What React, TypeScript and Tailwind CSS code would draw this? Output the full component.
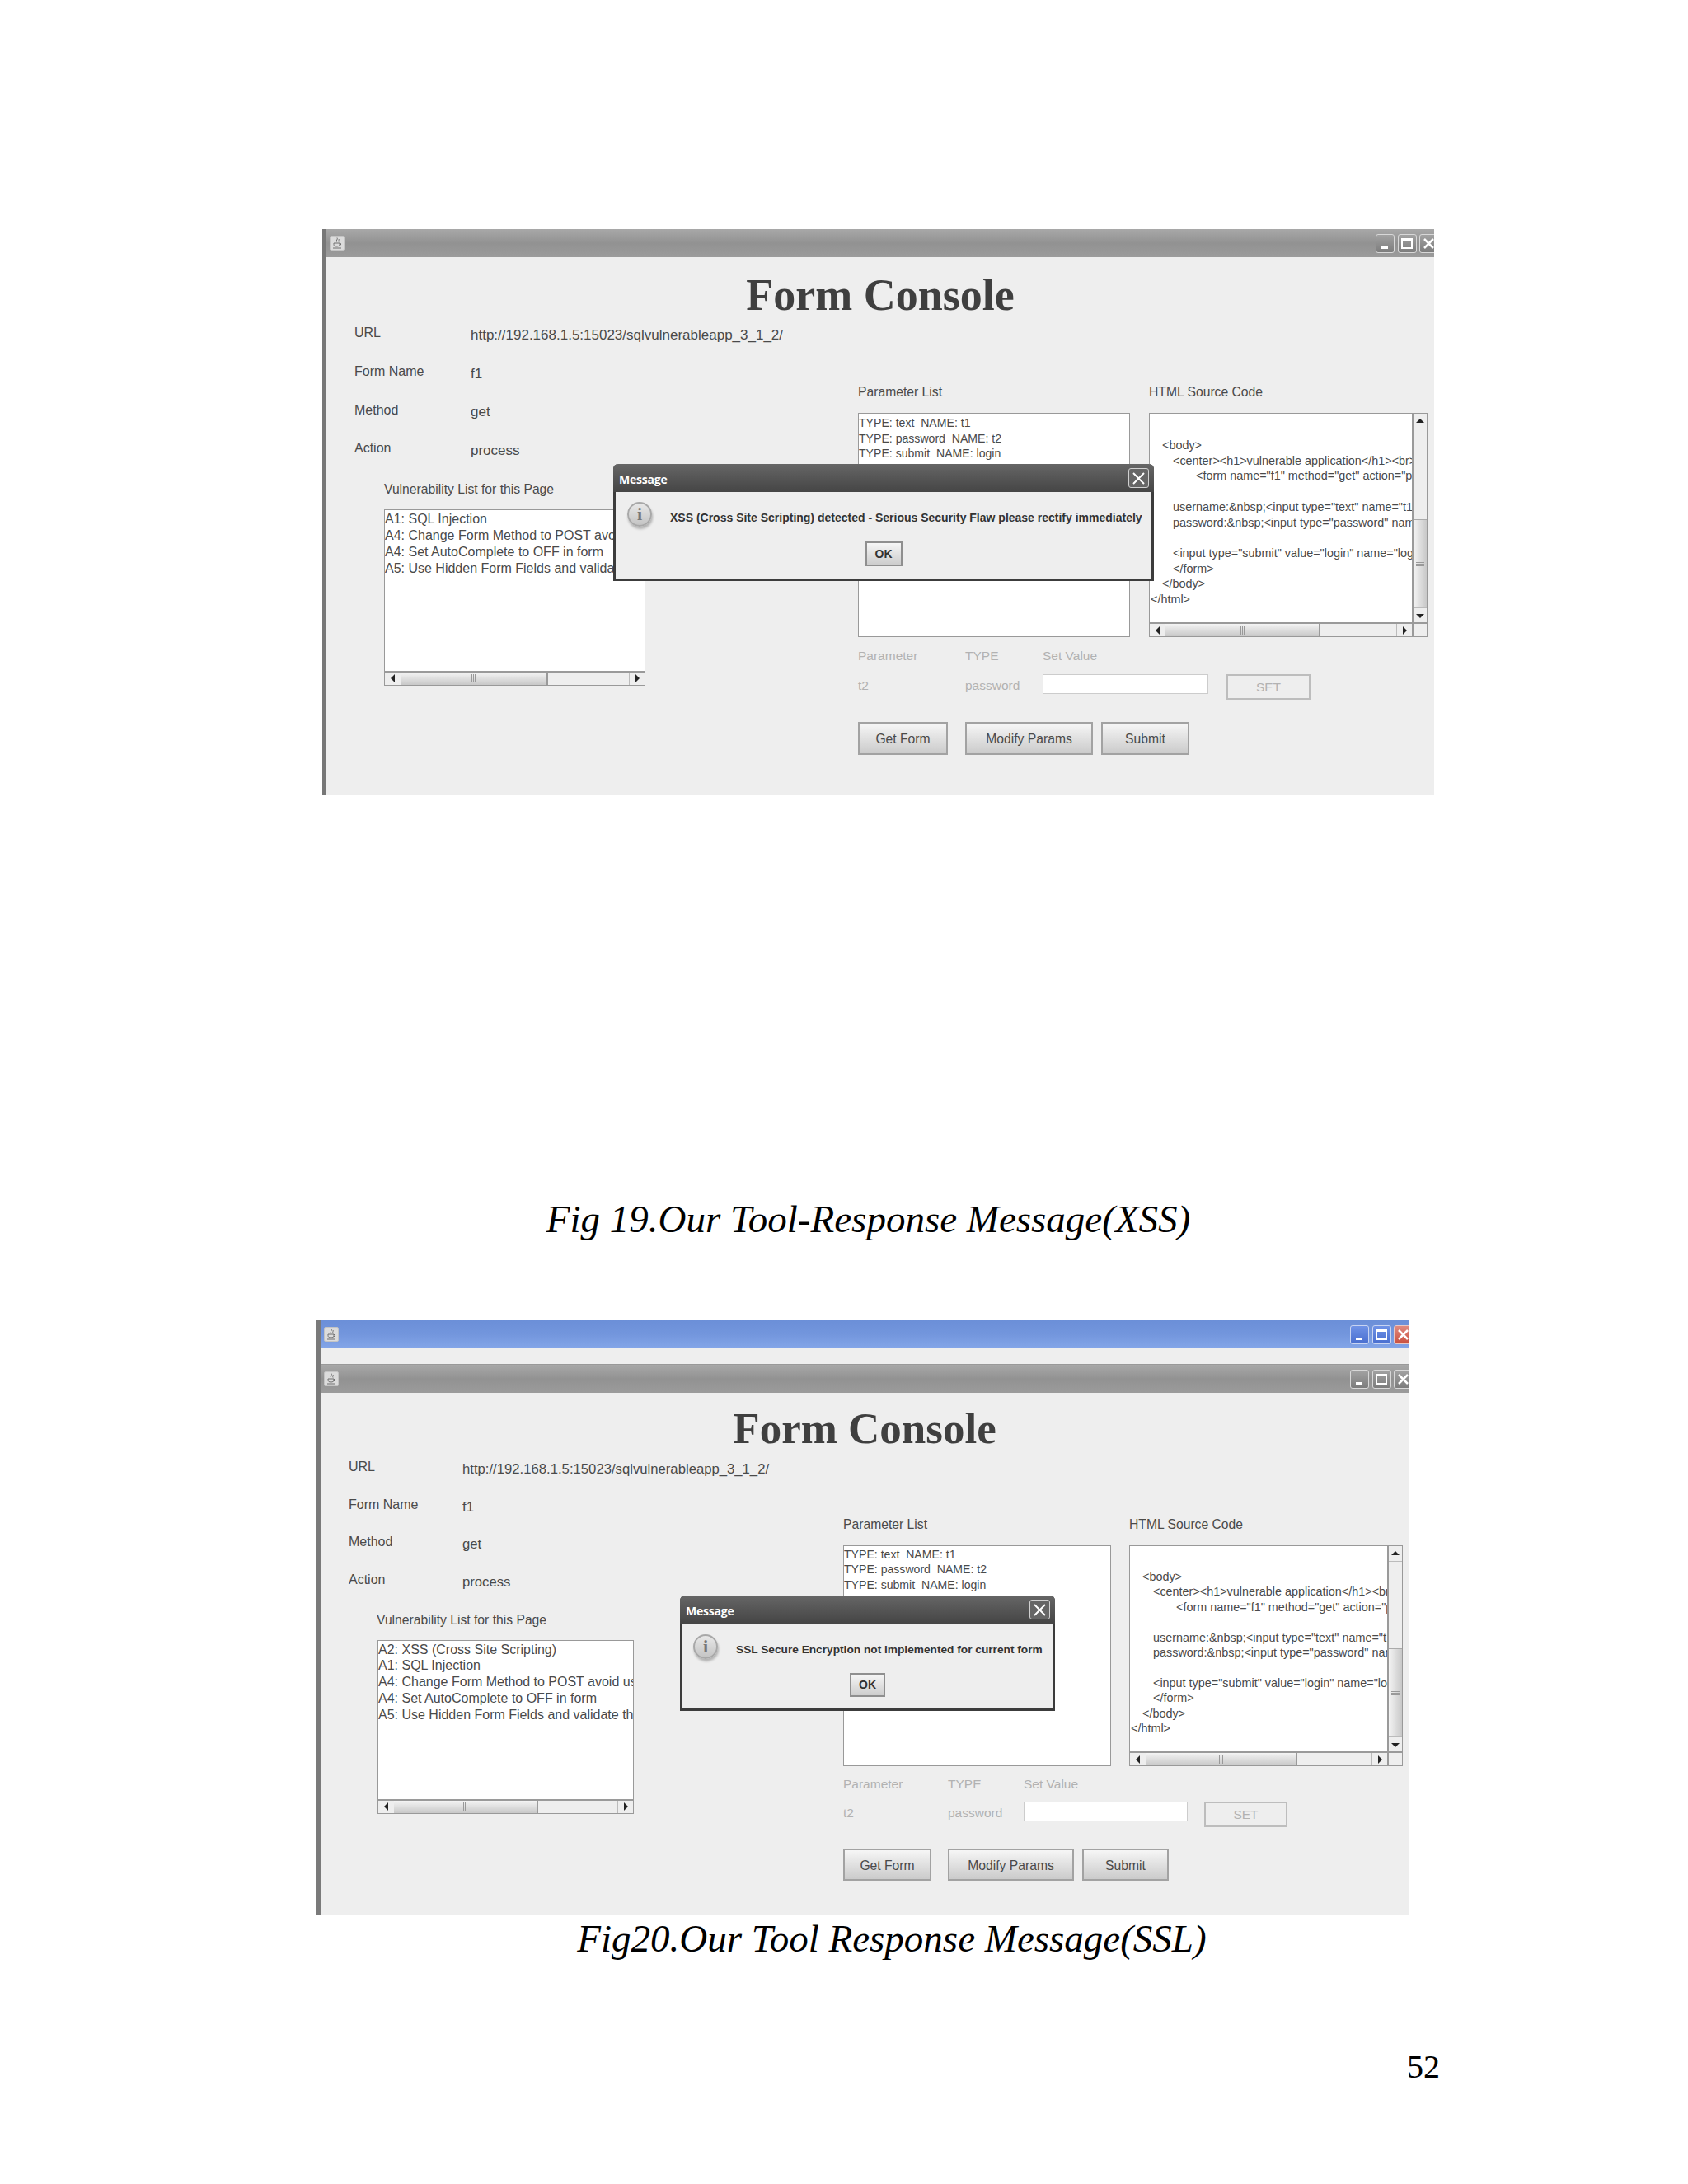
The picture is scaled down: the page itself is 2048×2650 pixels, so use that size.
import React from 'react';

const one = {
  heading: 'mt-[23px] h-[46px] text-[54px]',
  leftCol: 'w-[645px] pl-[34px]',
  rows: 'grid-cols-[141px_1fr] auto-rows-[46.7px]',
  value: 'text-[17px]',
  vulnLabel: 'mt-[16px] ml-[36px]',
  vulnBox: 'mt-[14px] ml-[36px] w-[317px] h-[214px]',
  vulnText: 'pt-[1px] leading-[20px]',
  rightCol: 'mt-[85px]',
  boxes: 'mt-[15px] gap-[23px] h-[272px]',
  paramBox: 'w-[330px] pt-[2px] leading-[18.7px]',
  sourceBox: 'w-[338px]',
  sourceText: 'pt-[29px] leading-[18.7px]',
  labelGap: 'gap-[23px]',
  paramLabelCol: 'w-[330px]',
  row1: 'mt-[13px]',
  col1: 'w-[130px]',
  col2: 'w-[94px]',
  row2: 'mt-[12px]',
  valueInput: 'w-[201px]',
  setBtn: 'ml-[22px] w-[102px]',
  buttons: 'mt-[27px] h-[40px]',
  getBtn: 'w-[109px]',
  modifyBtn: 'ml-[21px] w-[155px]',
  submitBtn: 'ml-[10px] w-[107px]',
  dialog: 'left-[348px] top-[251px] w-[656px] h-[142px]',
  dialogPad: 'pl-[14px] mt-[12px]',
  message: 'text-[14px]',
  okBtn: 'mt-[18px] w-[45px] h-[30px]',
};

const two = {
  heading: 'mt-[20px] h-[47px] text-[53px]',
  leftCol: 'w-[634px] pl-[34px]',
  rows: 'grid-cols-[138px_1fr] auto-rows-[45.7px]',
  value: 'text-[16.7px]',
  vulnLabel: 'mt-[16px] ml-[34px]',
  vulnBox: 'mt-[14px] ml-[35px] w-[311px] h-[211px]',
  vulnText: 'pt-[1px] leading-[19.7px]',
  rightCol: 'mt-[83px]',
  boxes: 'mt-[15px] gap-[22px] h-[268px]',
  paramBox: 'w-[325px] pt-[1px] leading-[18.4px]',
  sourceBox: 'w-[332px]',
  sourceText: 'pt-[28px] leading-[18.4px]',
  labelGap: 'gap-[22px]',
  paramLabelCol: 'w-[325px]',
  row1: 'mt-[12px]',
  col1: 'w-[127px]',
  col2: 'w-[92px]',
  row2: 'mt-[11px]',
  valueInput: 'w-[199px]',
  setBtn: 'ml-[20px] w-[101px]',
  buttons: 'mt-[26px] h-[39px]',
  getBtn: 'w-[107px]',
  modifyBtn: 'ml-[20px] w-[153px]',
  submitBtn: 'ml-[10px] w-[105px]',
  dialog: 'left-[436px] top-[246px] w-[455px] h-[140px]',
  dialogPad: 'pl-[13px] mt-[13px]',
  message: 'text-[13.7px]',
  okBtn: 'mt-[17px] w-[43px] h-[29px]',
};

const sourceLines = [
  { text: '<body>', cls: 'pl-[15px]' },
  { text: '<center><h1>vulnerable application</h1><br>', cls: 'pl-[28px]' },
  { text: '<form name="f1" method="get" action="process">', cls: 'pl-[56px]' },
  { text: '\u00a0', cls: '' },
  { text: 'username:&nbsp;<input type="text" name="t1">', cls: 'pl-[28px]' },
  { text: 'password:&nbsp;<input type="password" name="t2">', cls: 'pl-[28px]' },
  { text: '\u00a0', cls: '' },
  { text: '<input type="submit" value="login" name="login">', cls: 'pl-[28px]' },
  { text: '</form>', cls: 'pl-[28px]' },
  { text: '</body>', cls: 'pl-[15px]' },
  { text: '</html>', cls: 'pl-[1px]' },
];

function JavaIcon() {
  return (
    <div className="w-[18px] h-[18px] rounded-[2px] bg-[#dcdcdc] border border-[#c4c4c4] flex items-center justify-center">
      <svg width="12" height="15" viewBox="0 0 12 15" fill="none" stroke="#6f6f6f" strokeWidth="1">
        <path d="M6 0.5c1.5 2-2 3-0.5 5M8 2c1 1.2-1 2 0 3.5" />
        <path d="M2 7h7v1.5C9 10 8 11 5.500 11S2 10 2 8.500zM9 7.500h1.500V9L8.500 10M1 13h10" />
      </svg>
    </div>
  );
}

function WindowControls({ blue }: { blue?: boolean }) {
  const box = blue
    ? 'bg-linear-to-b from-[#6f92e6] to-[#4a6fd0] border-[#c8d4f2]'
    : 'bg-linear-to-b from-[#a2a2a2] to-[#7d7d7d] border-[#d8d8d8]';
  return (
    <div className="flex gap-[3.5px] -mr-[5px]">
      <div className={`w-[23px] h-[23px] rounded-[3px] border flex items-end pl-[6px] pb-[4px] ${box}`}>
        <div className="w-[8px] h-[3px] bg-white" />
      </div>
      <div className={`w-[23px] h-[23px] rounded-[3px] border flex items-center justify-center ${box}`}>
        <div className="w-[14px] h-[13px] border-2 border-t-[3px] border-white" />
      </div>
      <div
        className={`w-[23px] h-[23px] rounded-[3px] border flex items-center justify-center ${
          blue ? 'bg-linear-to-b from-[#e08a80] to-[#c9503f] border-[#e8c8c4]' : box
        }`}
      >
        <svg width="15" height="15" viewBox="0 0 15 15" stroke="white" strokeWidth="2.5">
          <path d="M2 2l11 11M13 2L2 13" />
        </svg>
      </div>
    </div>
  );
}

function TitleBar({ blue }: { blue?: boolean }) {
  return (
    <div
      className={`h-[34px] shrink-0 flex items-center justify-between pl-[4px] ${
        blue
          ? 'bg-linear-to-b from-[#6b8fd8] via-[#7396dd] to-[#83a5e8]'
          : 'bg-linear-to-b from-[#a8a8a8] via-[#929292] to-[#9b9b9b]'
      }`}
    >
      <JavaIcon />
      <WindowControls blue={blue} />
    </div>
  );
}

function Arrow({ dir }: { dir: 'left' | 'right' | 'up' | 'down' }) {
  const paths = { left: 'M8 1v10L3 6z', right: 'M4 1v10l5-5z', up: 'M1 8h10L6 3z', down: 'M1 4h10L6 9z' };
  return (
    <svg width="12" height="12" viewBox="0 0 12 12" fill="#222">
      <path d={paths[dir]} />
    </svg>
  );
}

function HScrollbar({ thumb }: { thumb: string }) {
  return (
    <div className="h-[17px] shrink-0 flex border-t-2 border-[#9a9a9a] bg-[#eeeeee]">
      <div className="w-[19px] flex items-center justify-center">
        <Arrow dir="left" />
      </div>
      <div className="flex-1 flex">
        <div
          className={`${thumb} flex items-center justify-center gap-[1px] bg-linear-to-b from-[#f4f4f4] to-[#c8c8c8] border-r-2 border-[#9a9a9a]`}
        >
          <div className="w-px h-[10px] bg-[#999]" />
          <div className="w-px h-[10px] bg-[#999]" />
          <div className="w-px h-[10px] bg-[#999]" />
        </div>
      </div>
      <div className="w-[19px] flex items-center justify-center border-l border-[#bbb]">
        <Arrow dir="right" />
      </div>
    </div>
  );
}

function VScrollbar() {
  return (
    <div className="w-[18px] shrink-0 flex flex-col border-l-2 border-[#9a9a9a] bg-[#eeeeee]">
      <div className="h-[19px] flex items-center justify-center border-b border-[#bbb]">
        <Arrow dir="up" />
      </div>
      <div className="flex-1 flex flex-col justify-end">
        <div className="h-[107px] flex flex-col items-center justify-center gap-[1px] bg-linear-to-r from-[#f4f4f4] to-[#c8c8c8] border-t border-[#aaa]">
          <div className="w-[10px] h-px bg-[#999]" />
          <div className="w-[10px] h-px bg-[#999]" />
          <div className="w-[10px] h-px bg-[#999]" />
        </div>
      </div>
      <div className="h-[18px] flex items-center justify-center border-t border-[#bbb]">
        <Arrow dir="down" />
      </div>
      <div className="h-[17px] border-t-2 border-[#9a9a9a]" />
    </div>
  );
}

function InfoIcon() {
  return (
    <div className="w-[30px] h-[30px] shrink-0 rounded-full bg-linear-to-b from-[#e8e8e8] to-[#c4c4c4] border-2 border-[#a8a8a8] shadow-[1px_3px_3px_rgba(0,0,0,0.25)] flex items-center justify-center text-[#777] text-[22px] font-bold font-['Liberation_Serif',serif] leading-none">
      i
    </div>
  );
}

function Dialog({ s, message }: { s: typeof one; message: string }) {
  return (
    <div className={`absolute ${s.dialog} flex flex-col bg-[#eeeeee] border-[3px] border-t-0 border-[#3c3c3c] rounded-t-[6px]`}>
      <div className="h-[34px] shrink-0 -mx-[3px] rounded-t-[6px] bg-linear-to-b from-[#666] to-[#454545] flex items-center justify-between pl-[7px] pr-[6px]">
        <span className="pt-[2px] text-white font-bold text-[14px] tracking-[-0.2px] font-['Open_Sans',sans-serif]">Message</span>
        <div className="w-[25px] h-[24px] border border-[#d0d0d0] rounded-[3px] bg-[#666] flex items-center justify-center">
          <svg width="17" height="17" viewBox="0 0 17 17" stroke="white" strokeWidth="2">
            <path d="M2 2l13 13M15 2L2 15" />
          </svg>
        </div>
      </div>
      <div className={`flex items-start gap-[22px] ${s.dialogPad}`}>
        <InfoIcon />
        <span className={`mt-[9px] leading-[20px] font-bold text-[#333] whitespace-nowrap ${s.message}`}>{message}</span>
      </div>
      <div className="flex justify-center">
        <button className={`${s.okBtn} border-2 border-[#8f8f8f] bg-linear-to-b from-[#f6f6f6] to-[#cdcdcd] text-[14px] font-bold text-[#333]`}>
          OK
        </button>
      </div>
    </div>
  );
}

function FormConsole({
  s,
  vulns,
  message,
  scrollThumb,
  sourceThumb,
}: {
  s: typeof one;
  vulns: string[];
  message: string;
  scrollThumb: string;
  sourceThumb: string;
}) {
  const rows = [
    ['URL', 'http://192.168.1.5:15023/sqlvulnerableapp_3_1_2/'],
    ['Form Name', 'f1'],
    ['Method', 'get'],
    ['Action', 'process'],
  ];
  const btn = 'pt-[2px] border-2 border-[#a2a2a2] bg-linear-to-b from-[#f6f6f6] to-[#cbcbcb] text-[15.7px] text-[#4a4a4a]';

  return (
    <div className="relative flex-1 bg-[#eeeeee]">
      <h1 className={`${s.heading} flex items-center justify-center font-['Liberation_Serif',serif] font-bold text-[#3f3f3f] leading-none`}>
        Form Console
      </h1>
      <div className="flex">
        {/* Left side: form details and vulnerabilities */}
        <div className={`${s.leftCol} shrink-0`}>
          <div className={`grid ${s.rows} text-[#4a4a4a]`}>
            {rows.map(([label, value]) => (
              <React.Fragment key={label}>
                <div className="flex items-center text-[16px]">{label}</div>
                <div className={`flex items-center pt-[5px] whitespace-nowrap ${s.value}`}>{value}</div>
              </React.Fragment>
            ))}
          </div>
          <div className={`${s.vulnLabel} h-[20px] leading-[20px] text-[15.7px] text-[#4a4a4a]`}>Vulnerability List for this Page</div>
          <div className={`${s.vulnBox} flex flex-col bg-white border-[1.5px] border-[#999]`}>
            <div className={`flex-1 overflow-hidden whitespace-nowrap text-[16px] text-[#4a4a4a] ${s.vulnText}`}>
              {vulns.map((v) => (
                <div key={v}>{v}</div>
              ))}
            </div>
            <HScrollbar thumb={scrollThumb} />
          </div>
        </div>

        {/* Right side: parameters and source */}
        <div className={s.rightCol}>
          <div className={`flex ${s.labelGap} h-[20px] leading-[20px] text-[15.7px] text-[#4a4a4a]`}>
            <div className={s.paramLabelCol}>Parameter List</div>
            <div>HTML Source Code</div>
          </div>
          <div className={`flex ${s.boxes}`}>
            <div className={`${s.paramBox} bg-white border-[1.5px] border-[#999] text-[14.1px] text-[#4a4a4a] whitespace-pre overflow-hidden`}>
              <div>{'TYPE: text  NAME: t1'}</div>
              <div>{'TYPE: password  NAME: t2'}</div>
              <div>{'TYPE: submit  NAME: login'}</div>
            </div>
            <div className={`${s.sourceBox} flex bg-white border-[1.5px] border-[#999]`}>
              <div className="flex-1 min-w-0 flex flex-col">
                <div className={`flex-1 overflow-hidden whitespace-nowrap text-[14.4px] text-[#4a4a4a] ${s.sourceText}`}>
                  {sourceLines.map((line, i) => (
                    <div key={i} className={line.cls}>
                      {line.text}
                    </div>
                  ))}
                </div>
                <HScrollbar thumb={sourceThumb} />
              </div>
              <VScrollbar />
            </div>
          </div>
          <div className={`flex ${s.row1} h-[20px] leading-[20px] text-[15.5px] text-[#b2b2b2]`}>
            <div className={s.col1}>Parameter</div>
            <div className={s.col2}>TYPE</div>
            <div>Set Value</div>
          </div>
          <div className={`flex items-start ${s.row2} text-[15.5px] text-[#b2b2b2]`}>
            <div className={`${s.col1} mt-[4px] leading-[20px]`}>t2</div>
            <div className={`${s.col2} mt-[4px] leading-[20px]`}>password</div>
            <div className={`${s.valueInput} h-[24px] bg-white border border-[#ccc]`} />
            <button className={`${s.setBtn} h-[31px] border-2 border-[#bdbdbd] text-[15.5px] text-[#b2b2b2]`}>SET</button>
          </div>
          <div className={`flex ${s.buttons}`}>
            <button className={`${s.getBtn} ${btn}`}>Get Form</button>
            <button className={`${s.modifyBtn} ${btn}`}>Modify Params</button>
            <button className={`${s.submitBtn} ${btn} border-[#8a8a8a]`}>Submit</button>
          </div>
        </div>
      </div>
      <Dialog s={s} message={message} />
    </div>
  );
}

export default function App() {
  return (
    <div className="w-[2048px] h-[2650px] bg-white overflow-hidden pt-[278px] font-['Liberation_Sans',sans-serif]">
      {/* Fig 19 */}
      <div className="ml-[391px] w-[1349px] h-[687px] flex flex-col overflow-hidden border-l-[5px] border-[#777]">
        <TitleBar />
        <FormConsole
          s={one}
          vulns={[
            'A1: SQL Injection',
            'A4: Change Form Method to POST avoid using GET',
            'A4: Set AutoComplete to OFF in form',
            'A5: Use Hidden Form Fields and validate them',
          ]}
          message="XSS (Cross Site Scripting) detected - Serious Security Flaw please rectify immediately"
          scrollThumb="w-[179px]"
          sourceThumb="w-[188px]"
        />
      </div>
      <p className="mt-[484px] pl-[59px] h-[60px] leading-[60px] text-center text-[47px] italic font-['Liberation_Serif',serif] text-black">
        Fig 19.Our Tool-Response Message(XSS)
      </p>

      {/* Fig 20 */}
      <div className="mt-[93px] ml-[384px] w-[1325px] h-[721px] flex flex-col overflow-hidden border-l-[5px] border-[#7a7a7a]">
        <TitleBar blue />
        <div className="h-[20px] shrink-0 bg-[#eeeeee] border-b border-[#999]" />
        <TitleBar />
        <FormConsole
          s={two}
          vulns={[
            'A2: XSS (Cross Site Scripting)',
            'A1: SQL Injection',
            'A4: Change Form Method to POST avoid using GET',
            'A4: Set AutoComplete to OFF in form',
            'A5: Use Hidden Form Fields and validate them',
          ]}
          message="SSL Secure Encryption not implemented for current form"
          scrollThumb="w-[175px]"
          sourceThumb="w-[184px]"
        />
      </div>
      <p className="mt-[4px] pl-[116px] h-[50px] leading-[50px] text-center text-[47px] italic font-['Liberation_Serif',serif] text-black">
        Fig20.Our Tool Response Message(SSL)
      </p>
      <p className="mt-[111px] pr-[301px] h-[40px] leading-[40px] text-right text-[40px] font-['Liberation_Serif',serif] text-black">52</p>
    </div>
  );
}
